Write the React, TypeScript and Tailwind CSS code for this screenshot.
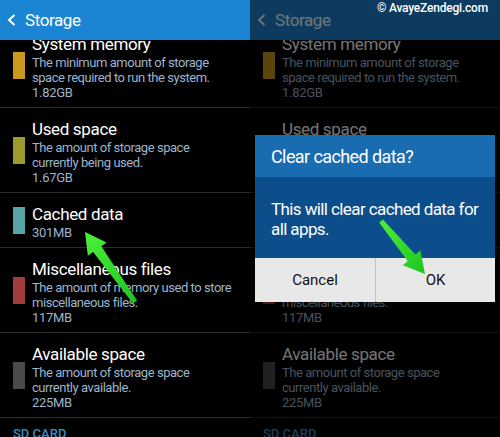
import React from "react";

type Item = { title: string; desc: string[]; value: string; color: string };

const items: Item[] = [
  { title: "System memory", desc: ["The minimum amount of storage", "space required to run the system."], value: "1.82GB", color: "#c99a1e" },
  { title: "Used space", desc: ["The amount of storage space", "currently being used."], value: "1.67GB", color: "#9c9c2e" },
  { title: "Cached data", desc: [], value: "301MB", color: "#58a3a6" },
  { title: "Miscellaneous files", desc: ["The amount of memory used to store", "miscellaneous files."], value: "117MB", color: "#a33c3c" },
  { title: "Available space", desc: ["The amount of storage space", "currently available."], value: "225MB", color: "#4a4a4a" },
];

function arrowPoints(tailX: number, tailY: number, tipX: number, tipY: number, headL: number, headW: number, shaftHead: number, shaftTail: number) {
  const dx = tailX - tipX;
  const dy = tailY - tipY;
  const len = Math.sqrt(dx * dx + dy * dy);
  const ux = dx / len;
  const uy = dy / len;
  const px = -uy;
  const py = ux;
  const bx = tipX + ux * headL;
  const by = tipY + uy * headL;
  const pts: [number, number][] = [
    [tipX, tipY],
    [bx + (px * headW) / 2, by + (py * headW) / 2],
    [bx + (px * shaftHead) / 2, by + (py * shaftHead) / 2],
    [tailX + (px * shaftTail) / 2, tailY + (py * shaftTail) / 2],
    [tailX - (px * shaftTail) / 2, tailY - (py * shaftTail) / 2],
    [bx - (px * shaftHead) / 2, by - (py * shaftHead) / 2],
    [bx - (px * headW) / 2, by - (py * headW) / 2],
  ];
  return pts.map((p) => `${p[0].toFixed(1)},${p[1].toFixed(1)}`).join(" ");
}

const font = { fontFamily: "Roboto, 'Open Sans', sans-serif" };

function Panel() {
  return (
    <div className="flex flex-col w-[250px] h-[437px] overflow-hidden bg-black">
      <div className="relative z-10 h-[40px] shrink-0 bg-[#1b84d3] flex items-center pl-[7px]">
        <svg width="9" height="12" viewBox="0 0 9 12">
          <polyline points="7.5,1 2,6 7.5,11" fill="none" stroke="white" strokeWidth="2" />
        </svg>
        <span className="ml-[9px] text-[17px] leading-[20px] tracking-[-0.4px] text-white">Storage</span>
      </div>
      <div className="flex-1 overflow-hidden">
        <div className="mt-[-17px]">
          {items.map((it) => (
            <div key={it.title} className="flex items-center border-b border-[#2c2c2c]">
              <div className="ml-[13px] mr-[7px] w-[12px] h-[27px] shrink-0" style={{ backgroundColor: it.color }} />
              <div className="pt-[10px] pb-[7px] whitespace-nowrap">
                <div className="text-[17px] leading-[22px] tracking-[-0.35px] text-white">{it.title}</div>
                {it.desc.map((d) => (
                  <div key={d} className="text-[13px] leading-[15px] tracking-[-0.45px] text-[#9cb4cc]">{d}</div>
                ))}
                <div className="text-[13px] leading-[15px] tracking-[-0.3px] text-[#9cb4cc]">{it.value}</div>
              </div>
            </div>
          ))}
          <div className="pl-[13px] pt-[8px] text-[13px] leading-[16px] font-medium text-[#3a8cc4]">SD CARD</div>
        </div>
      </div>
    </div>
  );
}

export default function App() {
  return (
    <div className="relative flex w-[500px] h-[437px] overflow-hidden bg-black" style={font}>
      <Panel />
      <div className="relative">
        <Panel />
        <div className="absolute inset-0 z-20 bg-black/55" />
        <div className="absolute z-30 right-[12px] top-[1px] text-[12px] leading-[15px] tracking-[-0.2px] font-medium text-white">© AvayeZendegi.com</div>
        <div className="absolute z-30 left-[5px] top-[135px] w-[240px] flex flex-col">
          <div className="h-[42px] bg-[#1a6cb0] flex items-center px-[16px] text-[18px] tracking-[-0.6px] text-white whitespace-nowrap">Clear cached data?</div>
          <div className="h-[81px] bg-[#0c4e8b] px-[16px] pt-[22px] text-[17px] leading-[20px] tracking-[-0.6px] text-white whitespace-nowrap">
            <div>This will clear cached data for</div>
            <div>all apps.</div>
          </div>
          <div className="h-[44px] bg-[#e8e8e8] grid grid-cols-2 text-[15px] text-[#111]">
            <div className="flex items-center justify-center">Cancel</div>
            <div className="flex items-center justify-center border-l border-[#c4c4c4]">OK</div>
          </div>
        </div>
      </div>
      <svg className="absolute inset-0 z-40 pointer-events-none" width="500" height="437">
        <defs>
          <linearGradient id="g" x1="0" y1="0" x2="1" y2="1">
            <stop offset="0" stopColor="#4cf03a" />
            <stop offset="1" stopColor="#1fc41f" />
          </linearGradient>
        </defs>
        <polygon points={arrowPoints(135, 302, 85, 232, 21, 23, 10, 5)} fill="url(#g)" />
        <polygon points={arrowPoints(381, 221, 425, 274, 21, 23, 10, 5)} fill="url(#g)" />
      </svg>
    </div>
  );
}
